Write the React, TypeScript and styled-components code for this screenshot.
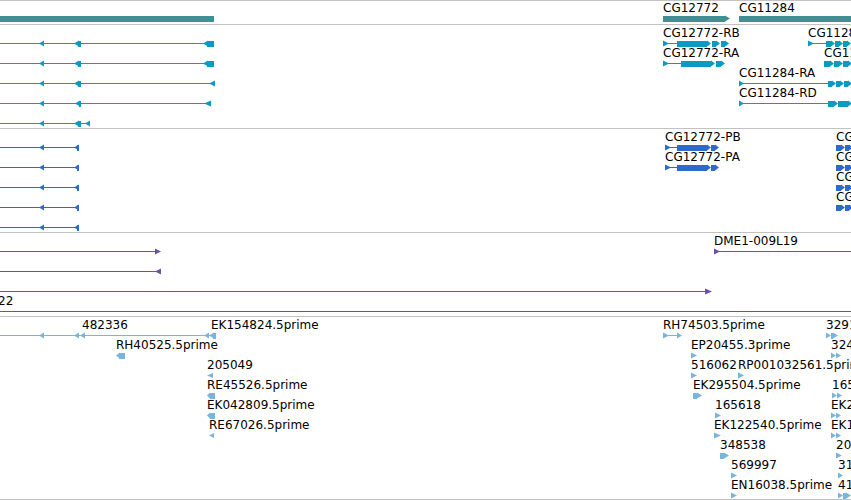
import React from 'react';
import styled, { createGlobalStyle } from 'styled-components';

const GlobalStyle = createGlobalStyle`
  html, body {
    margin: 0;
    padding: 0;
    background: #fff;
    overflow: hidden;
  }
  body {
    font-family: "DejaVu Sans", "Liberation Sans", sans-serif;
  }
`;

const Browser = styled.div`
  width: 851px;
  height: 500px;
  display: flex;
  flex-direction: column;
  background: #fff;
`;

const Track = styled.div<{ $height: number; $last?: boolean }>`
  position: relative;
  flex: none;
  box-sizing: border-box;
  height: ${p => p.$height}px;
  border-top: 1px solid #c2c2c2;
  border-bottom: ${p => (p.$last ? '1px solid #c2c2c2' : 'none')};
  overflow: hidden;
`;

const Glyphs = styled.svg`
  position: absolute;
  top: 0;
  left: 0;
  overflow: hidden;
`;

const FeatureLabel = styled.span`
  position: absolute;
  white-space: nowrap;
  font-size: 12px;
  line-height: 14px;
  color: #000;
`;

type Shape =
  | { t: 'line'; x1: number; x2: number; y: number }
  | { t: 'box'; x1: number; x2: number; y: number; h: number }
  | { t: 'tri'; x: number; y: number; w: number; h: number; dir: 1 | -1 };

interface Label {
  text: string;
  x: number;
  y: number;
}

interface TrackDef {
  name: string;
  top: number;
  height: number;
  color: string;
  shapes: Shape[];
  labels: Label[];
  last?: boolean;
}

// y is always the page row of the feature's centre line
const line = (x1: number, x2: number, y: number): Shape => ({ t: 'line', x1, x2, y });
const box = (x1: number, x2: number, y: number, h = 6): Shape => ({ t: 'box', x1, x2, y, h });
const tl = (x: number, y: number, w = 5, h = 6): Shape => ({ t: 'tri', x, y, w, h, dir: -1 });
const tr = (x: number, y: number, w = 5, h = 6): Shape => ({ t: 'tri', x, y, w, h, dir: 1 });
const exR = (x1: number, x2: number, y: number, h = 6): Shape[] => [box(x1, x2 - 4, y, h), tr(x2 - 4, y, 4, h)];

const rows = (ys: number[], f: (y: number) => Shape[]) => ys.flatMap(f);

const tracks: TrackDef[] = [
  {
    name: 'genes',
    top: 0,
    height: 24,
    color: '#408f93',
    shapes: [
      box(0, 214, 18),
      box(663, 725, 18),
      tr(725, 18, 5, 6),
      box(739, 852, 18),
    ],
    labels: [
      { text: 'CG12772', x: 663, y: 18 },
      { text: 'CG11284', x: 739, y: 18 },
    ],
  },
  {
    name: 'transcripts',
    top: 24,
    height: 104,
    color: '#0a9bc3',
    shapes: [
      ...rows([43, 63], y => [line(0, 208, y), tl(39, y), tl(74, y), box(78, 81, y), tl(203, y, 5), box(207, 214, y)]),
      line(0, 210, 83), tl(39, 83), tl(74, 83), box(78, 81, 83), tl(209, 83, 6),
      line(0, 205, 103), tl(39, 103), tl(75, 103), box(79, 81, 103), tl(204, 103, 7),
      line(0, 86, 123), tl(39, 123), tl(74, 123), box(78, 81, 123), tl(85, 123, 5),
      tr(663, 43, 6), line(663, 677, 43), ...exR(677, 711, 43), ...exR(712, 720, 43), ...exR(721, 729, 43),
      tr(663, 63, 6), line(663, 681, 63), ...exR(681, 715, 63), ...exR(716, 725, 63),
      tr(808, 43, 6), line(808, 826, 43), ...exR(826, 835, 43), ...exR(835, 843, 43), ...exR(843, 851, 43),
      ...exR(824, 834, 63), ...exR(834, 843, 63), ...exR(843, 852, 63),
      tr(739, 83, 5), line(739, 828, 83), ...exR(828, 836, 83), ...exR(836, 844, 83), ...exR(844, 852, 83),
      tr(739, 103, 5), line(739, 828, 103), ...exR(828, 838, 103), ...exR(838, 852, 103),
    ],
    labels: [
      { text: 'CG12772-RB', x: 663, y: 43 },
      { text: 'CG12772-RA', x: 663, y: 63 },
      { text: 'CG11284-RB', x: 808, y: 43 },
      { text: 'CG11284-RC', x: 824, y: 63 },
      { text: 'CG11284-RA', x: 739, y: 83 },
      { text: 'CG11284-RD', x: 739, y: 103 },
    ],
  },
  {
    name: 'proteins',
    top: 128,
    height: 104,
    color: '#2e69cc',
    shapes: [
      ...rows([147, 167, 187, 207, 227], y => [line(0, 78, y), tl(39, y), tl(74, y), box(77, 79, y)]),
      ...rows([147, 167], y => [tr(665, y, 6), line(665, 677, y), ...exR(677, 711, y), ...exR(711, 719, y)]),
      ...rows([147, 167, 187, 207], y => [...exR(836, 845, y), ...exR(845, 853, y)]),
    ],
    labels: [
      { text: 'CG12772-PB', x: 665, y: 147 },
      { text: 'CG12772-PA', x: 665, y: 167 },
      { text: 'CG11284-PB', x: 836, y: 147 },
      { text: 'CG11284-PC', x: 836, y: 167 },
      { text: 'CG11284-PA', x: 836, y: 187 },
      { text: 'CG11284-PD', x: 836, y: 207 },
    ],
  },
  {
    name: 'clones',
    top: 232,
    height: 84,
    color: '#6c52a6',
    shapes: [
      line(0, 157, 251), tr(155, 251, 6),
      line(0, 157, 271), tl(155, 271, 6),
      line(0, 707, 291), tr(705, 291, 7),
      line(0, 851, 311),
      tr(714, 251, 6), line(714, 851, 251),
    ],
    labels: [
      { text: '22', x: -2, y: 311 },
      { text: 'DME1-009L19', x: 714, y: 251 },
    ],
  },
  {
    name: 'ests',
    top: 316,
    height: 184,
    color: '#7ab4dd',
    last: true,
    shapes: [
      line(0, 214, 335), tl(39, 335), tl(74, 335), tl(80, 335), tl(204, 335), tl(209, 335), box(213, 216, 335),
      tl(116, 355, 4), box(119, 125, 355),
      tl(207, 375, 6, 5),
      tl(207, 395, 3), box(210, 215, 395),
      tl(207, 415, 3), box(210, 215, 415),
      tl(209, 435, 5, 5),
      tr(663, 335, 6), line(663, 677, 335), tr(677, 335, 5),
      tr(826, 335), box(831, 833, 335), tr(833, 335),
      tr(691, 355, 6),
      tr(831, 355), tr(836, 355),
      tr(691, 375, 6), tr(738, 375, 6),
      box(693, 697, 395), tr(697, 395, 5),
      tr(832, 395), tr(837, 395),
      tr(715, 415, 6),
      tr(831, 415), tr(836, 415),
      tr(714, 435, 7),
      tr(831, 435), tr(836, 435),
      box(720, 724, 455), tr(724, 455, 5),
      tr(836, 455, 6),
      tr(731, 475, 6),
      tr(838, 475, 5),
      tr(731, 495, 6),
      tr(838, 495), box(843, 846, 495), tr(846, 495),
    ],
    labels: [
      { text: '482336', x: 82, y: 335 },
      { text: 'EK154824.5prime', x: 211, y: 335 },
      { text: 'RH40525.5prime', x: 116, y: 355 },
      { text: '205049', x: 207, y: 375 },
      { text: 'RE45526.5prime', x: 207, y: 395 },
      { text: 'EK042809.5prime', x: 207, y: 415 },
      { text: 'RE67026.5prime', x: 209, y: 435 },
      { text: 'RH74503.5prime', x: 663, y: 335 },
      { text: '329107', x: 826, y: 335 },
      { text: 'EP20455.3prime', x: 691, y: 355 },
      { text: '324562', x: 831, y: 355 },
      { text: '516062', x: 691, y: 375 },
      { text: 'RP001032561.5prime', x: 738, y: 375 },
      { text: 'EK295504.5prime', x: 693, y: 395 },
      { text: '165904', x: 832, y: 395 },
      { text: '165618', x: 715, y: 415 },
      { text: 'EK283617.5prime', x: 831, y: 415 },
      { text: 'EK122540.5prime', x: 714, y: 435 },
      { text: 'EK177402.5prime', x: 831, y: 435 },
      { text: '348538', x: 720, y: 455 },
      { text: '208833', x: 836, y: 455 },
      { text: '569997', x: 731, y: 475 },
      { text: '314276', x: 838, y: 475 },
      { text: 'EN16038.5prime', x: 731, y: 495 },
      { text: '418925', x: 838, y: 495 },
    ],
  },
];

const ShapeEl: React.FC<{ s: Shape }> = ({ s }) => {
  if (s.t === 'line') {
    return <rect x={s.x1} y={s.y} width={s.x2 - s.x1} height={1} shapeRendering="crispEdges" />;
  }
  if (s.t === 'box') {
    const top = Math.round(s.y + 0.5 - s.h / 2);
    return <rect x={s.x1} y={top} width={s.x2 - s.x1} height={s.h} shapeRendering="crispEdges" />;
  }
  const cy = s.y + 0.5;
  const pts =
    s.dir === 1
      ? `${s.x},${cy - s.h / 2} ${s.x + s.w},${cy} ${s.x},${cy + s.h / 2}`
      : `${s.x + s.w},${cy - s.h / 2} ${s.x},${cy} ${s.x + s.w},${cy + s.h / 2}`;
  return <polygon points={pts} />;
};

const TrackView: React.FC<{ def: TrackDef }> = ({ def }) => {
  const inner = def.top + 1;
  const h = def.height - 1 - (def.last ? 1 : 0);
  return (
    <Track $height={def.height} $last={def.last}>
      <Glyphs width={851} height={h} viewBox={`0 ${inner} 851 ${h}`} fill={def.color}>
        {def.shapes.map((s, i) => (
          <ShapeEl key={i} s={s} />
        ))}
      </Glyphs>
      {def.labels.map(l => (
        <FeatureLabel key={l.text + l.x} style={{ left: l.x, top: l.y - 17 - inner }}>
          {l.text}
        </FeatureLabel>
      ))}
    </Track>
  );
};

export default function App() {
  return (
    <>
      <GlobalStyle />
      <Browser>
        {tracks.map(t => (
          <TrackView key={t.name} def={t} />
        ))}
      </Browser>
    </>
  );
}
